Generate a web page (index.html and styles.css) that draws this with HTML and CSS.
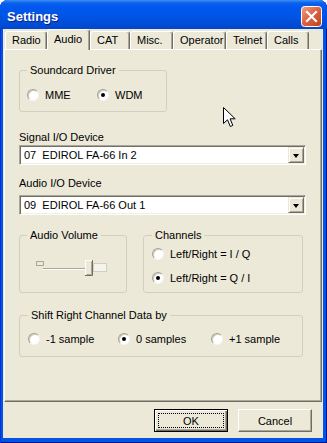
FILE: index.html
```html
<!DOCTYPE html>
<html>
<head>
<meta charset="utf-8">
<link rel="stylesheet" href="styles.css">
</head>
<body>
<div class="window">
  <div class="titlebar">
    <span class="title">Settings</span>
    <span class="close">
      <svg width="21" height="21" viewBox="0 0 21 21">
        <defs>
          <linearGradient id="cg" x1="0" y1="0" x2="1" y2="1">
            <stop offset="0" stop-color="#F0A08A"/>
            <stop offset="0.45" stop-color="#DE6544"/>
            <stop offset="1" stop-color="#C0401E"/>
          </linearGradient>
        </defs>
        <rect x="0.5" y="0.5" width="20" height="20" rx="3" fill="url(#cg)" stroke="#fff"/>
        <path d="M6 6 L15 15 M15 6 L6 15" stroke="#fff" stroke-width="2.2" stroke-linecap="square"/>
      </svg>
    </span>
  </div>
  <div class="client">
    <div class="tabs">
      <div class="tab">Radio</div>
      <div class="tab active">Audio</div>
      <div class="tab">CAT</div>
      <div class="tab">Misc.</div>
      <div class="tab">Operator</div>
      <div class="tab">Telnet</div>
      <div class="tab">Calls</div>
    </div>
    <div class="panel">
      <fieldset class="group sound">
        <legend>Soundcard Driver</legend>
        <div class="opts sound-opts">
          <label class="opt"><span class="radio"></span>MME</label>
          <label class="opt"><span class="radio on"></span>WDM</label>
        </div>
      </fieldset>

      <div class="field-label label1">Signal I/O Device</div>
      <div class="combo combo1"><span class="val">07  EDIROL FA-66 In 2</span><span class="drop"></span></div>

      <div class="field-label label2">Audio I/O Device</div>
      <div class="combo combo2"><span class="val">09  EDIROL FA-66 Out 1</span><span class="drop"></span></div>

      <div class="row">
        <fieldset class="group volume">
          <legend>Audio Volume</legend>
          <svg class="slider" width="74" height="18" viewBox="0 0 74 18">
            <rect x="1.5" y="3.5" width="7" height="4" fill="none" stroke="#ACA899"/>
            <line x1="8" y1="10.5" x2="50" y2="10.5" stroke="#ACA899"/>
            <line x1="8" y1="11.5" x2="50" y2="11.5" stroke="#fff"/>
            <rect x="58.5" y="5.5" width="13" height="8" fill="#F4F3EE" stroke="#D0D0BF"/>
            <rect x="50" y="2" width="8" height="16" fill="#ECE9D8"/>
            <path d="M50.5 17.5 V2.5 H57.5" fill="none" stroke="#fff"/>
            <path d="M57.5 2 V17.5 H50" fill="none" stroke="#716F64"/>
            <path d="M56.5 3.5 V16.5 H51.5" fill="none" stroke="#ACA899"/>
          </svg>
        </fieldset>
        <fieldset class="group channels">
          <legend>Channels</legend>
          <div class="opts chan-opts">
            <label class="opt"><span class="radio"></span>Left/Right = I / Q</label>
            <label class="opt"><span class="radio on"></span>Left/Right = Q / I</label>
          </div>
        </fieldset>
      </div>

      <fieldset class="group shift">
        <legend>Shift Right Channel Data by</legend>
        <div class="opts shift-opts">
          <label class="opt"><span class="radio"></span>-1 sample</label>
          <label class="opt"><span class="radio on"></span>0 samples</label>
          <label class="opt"><span class="radio"></span>+1 sample</label>
        </div>
      </fieldset>
    </div>
    <div class="footer">
      <button class="btn default"><span class="focus">OK</span></button>
      <button class="btn">Cancel</button>
    </div>
  </div>
  <svg class="cursor" width="13" height="21" viewBox="0 0 13 21">
    <path d="M0.5 0.5 L0.5 16.5 L4.5 12.8 L7.3 19.5 L9.8 18.4 L7.1 11.8 L12.2 11.8 Z" fill="#fff" stroke="#000" stroke-linejoin="miter"/>
  </svg>
</div>
</body>
</html>
```

FILE: styles.css
```css
* { box-sizing: border-box; }

body {
  margin: 0;
  font-family: "Liberation Sans", Arial, sans-serif;
  font-size: 11px;
  color: #000;
}

.window {
  position: relative;
  width: 327px;
  height: 443px;
  display: flex;
  flex-direction: column;
  background: #0055E5;
  border-radius: 8px 8px 0 0;
  overflow: hidden;
  box-shadow: inset 1px 0 0 #0831D9, inset -1px 0 0 #00138C, inset 0 -1px 0 #00138C;
}

.titlebar {
  flex: none;
  height: 29px;
  display: flex;
  align-items: center;
  justify-content: space-between;
  padding: 0 5px 0 7px;
  background: linear-gradient(#3D8FF6 0, #0A61EB 3px, #0058EE 7px, #0055E5 55%, #004CD6 85%, #0047CC 100%);
}

.title {
  color: #fff;
  font-weight: bold;
  font-size: 13px;
  margin-top: 4px;
  text-shadow: 1px 1px 0 #0A1E8C;
}

.close {
  width: 21px;
  height: 21px;
  margin-top: 3px;
  display: block;
}
.close svg { display: block; }

.client {
  flex: 1;
  margin: 0 4px 5px 3px;
  background: #ECE9D8;
  display: flex;
  flex-direction: column;
}

.tabs {
  flex: none;
  height: 20px;
  display: grid;
  grid-template-columns: 42px 43px 40px 43px 53px 41px 42px;
  align-items: end;
  padding-left: 2px;
  position: relative;
  z-index: 1;
}

.tab {
  height: 18px;
  padding: 1px 0 0 6px;
  border: 1px solid;
  border-bottom: 0;
  border-color: #fff #716F64 transparent #fff;
  border-radius: 3px 3px 0 0;
  box-shadow: inset -1px 0 0 #ACA899;
  line-height: 14px;
  white-space: nowrap;
  background: #ECE9D8;
}

.tab.active {
  height: 21px;
  margin-bottom: -1px;
  padding-top: 2px;
}

.panel {
  flex: none;
  height: 353px;
  margin: 0 1px;
  border: 1px solid;
  border-color: #fff #716F64 #716F64 #fff;
  box-shadow: inset -1px -1px 0 #ACA899;
  padding: 0 16px 0 14px;
}

.group {
  margin: 0;
  border: 1px solid #D0D0BF;
  border-radius: 3px;
  min-width: 0;
}

.group legend {
  padding: 0 3px;
  line-height: 13px;
}

.opt {
  display: flex;
  align-items: center;
  gap: 6px;
  height: 13px;
  white-space: nowrap;
}

.radio {
  flex: none;
  width: 12px;
  height: 12px;
  border-radius: 50%;
  background: #fff;
  border: 1px solid;
  border-color: #A5A294 #F6F5EF #F6F5EF #A5A294;
  box-shadow: inset 1px 1px 0 #CFCBBD;
  display: flex;
  align-items: center;
  justify-content: center;
}

.radio.on::after {
  content: "";
  width: 4px;
  height: 4px;
  border-radius: 50%;
  background: #000;
}

.sound {
  width: 148px;
  margin-top: 14px;
  padding: 11px 0 10px 7px;
}

.sound-opts {
  display: grid;
  grid-template-columns: 70px auto;
}

.field-label { line-height: 14px; }
.label1 { margin-top: 18px; }
.label2 { margin-top: 11px; }

.combo {
  width: 287px;
  height: 20px;
  display: flex;
  align-items: center;
  background: #fff;
  border: 1px solid;
  border-color: #ACA899 #fff #fff #ACA899;
  box-shadow: inset 1px 1px 0 #716F64, inset -1px -1px 0 #F1EFE2;
  padding: 1px 1px 1px 4px;
}
.combo1 { margin-top: 1px; }
.combo2 { margin-top: 5px; }

.combo .val {
  flex: 1;
  white-space: pre;
}

.drop {
  flex: none;
  width: 16px;
  height: 16px;
  background: #ECE9D8;
  border: 1px solid;
  border-color: #ECE9D8 #716F64 #716F64 #ECE9D8;
  box-shadow: inset 1px 1px 0 #fff, inset -1px -1px 0 #ACA899;
  display: flex;
  align-items: center;
  justify-content: center;
}

.drop::after {
  content: "";
  width: 0;
  height: 0;
  border-left: 3.5px solid transparent;
  border-right: 3.5px solid transparent;
  border-top: 4px solid #000;
  margin-top: 1px;
}

.row {
  display: flex;
  gap: 16px;
  margin-top: 14px;
}

.volume {
  width: 108px;
  height: 64px;
  padding: 0 0 0 7px;
}

.slider {
  display: block;
  margin: 16px 0 0 8px;
}

.channels {
  width: 160px;
  height: 64px;
  padding: 5px 0 0 8px;
}

.chan-opts {
  display: flex;
  flex-direction: column;
  gap: 11px;
}

.shift {
  width: 284px;
  margin-top: 16px;
  padding: 10px 0 11px 8px;
}

.shift-opts {
  display: grid;
  grid-template-columns: 90px 93px auto;
}

.footer {
  flex: 1;
  display: flex;
  justify-content: flex-end;
  align-items: flex-start;
  gap: 10px;
  padding: 7px 11px 0 0;
}

.btn {
  width: 74px;
  height: 23px;
  margin: 0;
  padding: 0;
  font: inherit;
  color: #000;
  background: #ECE9D8;
  border: 1px solid;
  border-color: #fff #716F64 #716F64 #fff;
  border-radius: 0;
  box-shadow: inset -1px -1px 0 #ACA899;
  display: flex;
  align-items: center;
  justify-content: center;
}

.btn.default {
  border-color: #000;
  box-shadow: inset 1px 1px 0 #fff, inset -1px -1px 0 #716F64, inset -2px -2px 0 #ACA899;
  padding: 3px;
  align-items: stretch;
}

.focus {
  flex: 1;
  border: 1px dotted #000;
  display: flex;
  align-items: center;
  justify-content: center;
}

.cursor {
  position: absolute;
  left: 223px;
  top: 107px;
}
```
